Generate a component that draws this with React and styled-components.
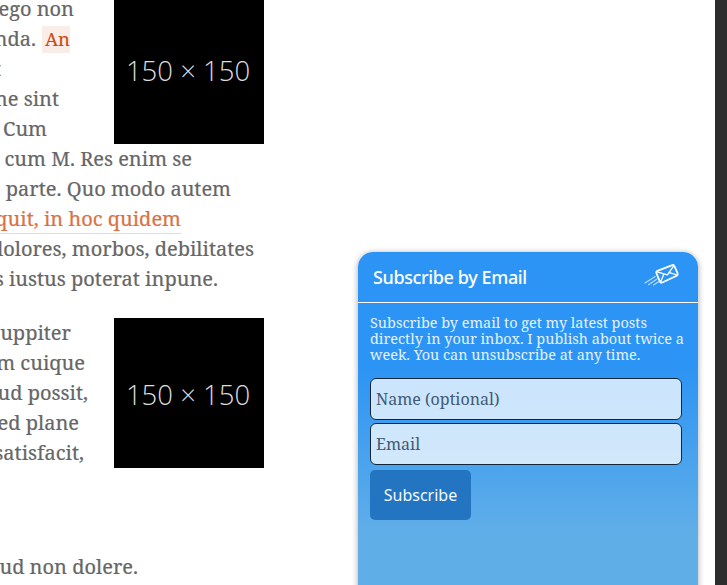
import React from "react";
import styled, { createGlobalStyle } from "styled-components";

const serif = `"Noto Serif", "Droid Serif", "DejaVu Serif Condensed", "DejaVu Serif", serif`;
const sans = `"Noto Sans", "Open Sans", sans-serif`;

const GlobalStyle = createGlobalStyle`
  *, *::before, *::after { box-sizing: border-box; }
  html, body { margin: 0; padding: 0; overflow: hidden; background: #fff; }
`;

const Page = styled.div`
  display: flex;
  width: 727px;
  height: 585px;
  overflow: hidden;
  background: #fff;
`;

const Article = styled.main`
  width: 358px;
  flex: none;
  margin-top: -6px;
  color: #666;
  font: 20px/30px ${serif};
  -webkit-text-stroke: 0.2px currentColor;
`;

const Paragraph = styled.section`
  margin-bottom: ${(p) => p.$gap || 0}px;
`;

const Wrapped = styled.div`
  display: grid;
  grid-template-columns: 114px 150px;
  height: 150px;
`;

const Line = styled.div`
  display: flex;
  justify-content: flex-end;
  align-items: center;
  width: ${(p) => p.$end}px;
  height: 30px;
  overflow: hidden;
  white-space: pre;
`;

const Highlight = styled.mark`
  height: 27px;
  margin-left: 6px;
  padding: 0 0 0 3px;
  color: #cb4b16;
  background: #faece6;
  font-size: 18.5px;
  line-height: 25px;
  -webkit-text-stroke-width: 0.1px;
`;

const TextLink = styled.a`
  height: 30px;
  border-bottom: 1px solid #f7d5c5;
  color: #d87343;
`;

const Fragment = styled.span`
  color: #4a7fc8;
`;

const Placeholder = styled.figure`
  display: flex;
  align-items: center;
  justify-content: center;
  width: 150px;
  height: 150px;
  margin: 0;
  padding: 3px 2px 0 0;
  background: #000;
  color: #ddd;
  font: 300 27.5px/30px "Open Sans", sans-serif;
  -webkit-text-stroke-width: 0;
  white-space: nowrap;
`;

const Panel = styled.aside`
  width: 340px;
  height: 360px;
  flex: none;
  margin-top: 252px;
  border-radius: 15px 15px 0 0;
  background: linear-gradient(#2c94f4 0, #2c94f4 113px, #60aee8 280px, #60aee8 100%);
  box-shadow: 0 1px 6px rgba(0, 0, 0, 0.35);
`;

const PanelHeader = styled.header`
  display: flex;
  align-items: center;
  justify-content: space-between;
  height: 51px;
  padding: 0 17px 0 15px;
  border-bottom: 1px solid #fff;
`;

const Title = styled.h2`
  margin: 0;
  color: #fff;
  font: 500 18px/26px ${sans};
  letter-spacing: -0.38px;
`;

const MailIcon = styled.svg`
  width: 37px;
  height: 24px;
  margin-top: -5px;
`;

const PanelBody = styled.form`
  display: flex;
  flex-direction: column;
  align-items: flex-start;
  padding: 12px 12px 0;
`;

const Intro = styled.p`
  margin: 0 0 15px;
  color: #e4f2fe;
  font: 14.44px/16px ${serif};
  white-space: nowrap;
`;

const Field = styled.input`
  width: 312px;
  height: 42px;
  margin: 0 0 3px;
  padding: 0 5px;
  border: 1px solid #12263a;
  border-radius: 6px;
  outline: none;
  background: rgba(255, 255, 255, 0.75);
  font: 16px/24px ${serif};
  &::placeholder { color: #405a74; opacity: 1; }
`;

const SubmitButton = styled.button`
  width: 101px;
  height: 50px;
  margin: 2px 0 0;
  padding: 0;
  border: 0;
  border-radius: 5px;
  background: #2375c1;
  color: #f4f9fe;
  font: 16px/24px ${sans};
`;

const EdgeStrip = styled.div`
  width: 12px;
  height: 585px;
  flex: none;
  margin-left: 17px;
  background: #2d2d2d;
`;

function FlyingMail() {
  return (
    <MailIcon viewBox="0 0 37 24" fill="none" stroke="#fff" strokeLinecap="round" strokeLinejoin="round">
      <path d="M12.8 8.2L28.3 2.1Q29.8 1.6 30.4 3L33.6 10.4Q34.2 12 32.7 12.8L18.3 19.5Q16.7 20.2 16 18.6L12.3 10Q11.8 8.7 12.8 8.2Z" strokeWidth="1.8" />
      <path d="M13 8.9L23.4 11.8L29.7 2.8M16.7 18.8L20 10.8M32.8 12L25.5 9.6" strokeWidth="1.3" />
      <path d="M11.2 13.5L1 20M13 16L4.5 21.7M14.6 18.7L9.5 22" strokeWidth="1.2" opacity=".65" />
    </MailIcon>
  );
}

export default function App() {
  return (
    <>
      <GlobalStyle />
      <Page>
        <Article>
          <Paragraph $gap={24}>
            <Wrapped>
              <div>
                <Line $end={74}>ego non</Line>
                <Line $end={70}>nda.<Highlight>An</Highlight></Line>
                <Line $end={1}><Fragment>t</Fragment></Line>
                <Line $end={59}>me sint</Line>
                <Line $end={47}>Cum</Line>
              </div>
              <Placeholder>150 × 150</Placeholder>
            </Wrapped>
            <Line $end={192}>cum M. Res enim se</Line>
            <Line $end={231}>parte. Quo modo autem</Line>
            <Line $end={181}><TextLink>quit, in hoc quidem</TextLink></Line>
            <Line $end={254}>dolores, morbos, debilitates</Line>
            <Line $end={218}>s iustus poterat inpune.</Line>
          </Paragraph>
          <Paragraph $gap={84}>
            <Wrapped>
              <div>
                <Line $end={71}>uppiter</Line>
                <Line $end={85}>m cuique</Line>
                <Line $end={88}>ud possit,</Line>
                <Line $end={79}>ed plane</Line>
                <Line $end={84}>satisfacit,</Line>
              </div>
              <Placeholder>150 × 150</Placeholder>
            </Wrapped>
          </Paragraph>
          <Line $end={138}>ud non dolere.</Line>
        </Article>
        <Panel>
          <PanelHeader>
            <Title>Subscribe by Email</Title>
            <FlyingMail />
          </PanelHeader>
          <PanelBody>
            <Intro>
              Subscribe by email to get my latest posts<br />
              directly in your inbox. I publish about twice a<br />
              week. You can unsubscribe at any time.
            </Intro>
            <Field placeholder="Name (optional)" />
            <Field placeholder="Email" />
            <SubmitButton type="button">Subscribe</SubmitButton>
          </PanelBody>
        </Panel>
        <EdgeStrip />
      </Page>
    </>
  );
}
